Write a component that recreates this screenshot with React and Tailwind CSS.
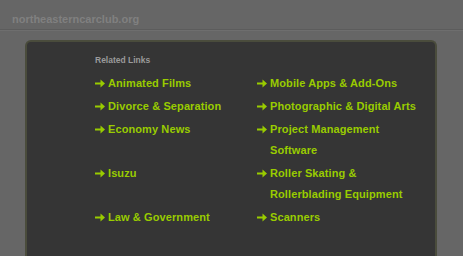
const LEFT = ["Animated Films", "Divorce & Separation", "Economy News", "Isuzu", "Law & Government"];
const RIGHT = [
  "Mobile Apps & Add-Ons",
  "Photographic & Digital Arts",
  "Project Management Software",
  "Roller Skating & Rollerblading Equipment",
  "Scanners",
];

function Arrow() {
  return (
    <svg width="10" height="9" viewBox="0 0 10 9" className="shrink-0 mt-[6px]">
      <path d="M0 3.5h5.5V0.5L10 4.5 5.5 8.5V5.5H0z" fill="#99cc00" />
    </svg>
  );
}

function Link({ label }) {
  return (
    <div className="flex gap-[3px] mb-[2px]">
      <Arrow />
      <span className="text-[11px] leading-[21px] font-bold text-[#99cc00] tracking-[0.1px] w-[150px]">{label}</span>
    </div>
  );
}

export default function App() {
  const rows = LEFT.map((l, i) => [l, RIGHT[i]]);
  return (
    <div
      className="w-[463px] h-[256px] overflow-hidden bg-[#666666]"
      style={{ fontFamily: '"Liberation Sans", Arial, sans-serif' }}
    >
      <div className="h-[30px] pl-[12px] pt-[12px] border-b border-[#5c5c5c]">
        <div className="text-[11px] font-bold leading-[14px] text-[#808080]">northeasterncarclub.org</div>
      </div>
      <div className="h-px bg-[#6e6e6e]" />
      <div className="ml-[25px] mt-[9px] w-[412px] h-[230px] rounded-t-[6px] border-2 border-b-0 border-[#4a4c3c] bg-[#353535] pl-[68px] pt-[12px]">
        <div className="text-[8.5px] font-bold leading-[12px] text-[#9a9a9a] mb-[7px]">Related Links</div>
        {rows.map(([a, b]) => (
          <div key={a} className="flex">
            <div className="w-[162px]">
              <Link label={a} />
            </div>
            <div>
              <Link label={b} />
            </div>
          </div>
        ))}
      </div>
    </div>
  );
}
